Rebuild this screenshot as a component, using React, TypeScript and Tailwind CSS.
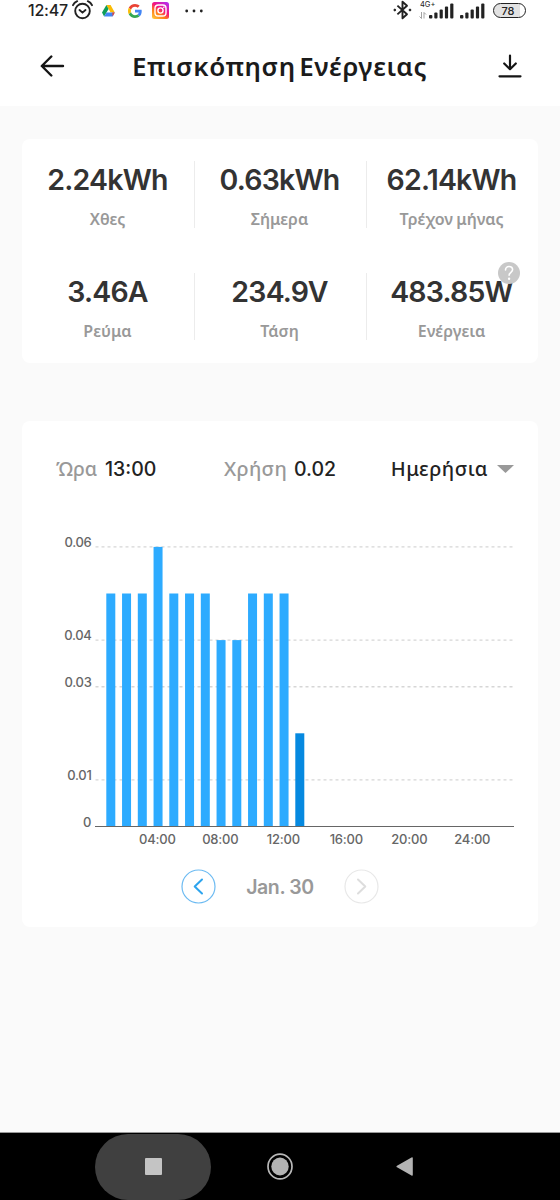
const bars = [5, 5, 5, 6, 5, 5, 5, 4, 4, 5, 5, 5, 2];
const hours = [4, 8, 12, 16, 20, 24];
const gridLines = [6, 4, 3, 1];

const stats = [
  { value: "2.24kWh", label: "Χθες" },
  { value: "0.63kWh", label: "Σήμερα" },
  { value: "62.14kWh", label: "Τρέχον μήνας" },
  { value: "3.46A", label: "Ρεύμα" },
  { value: "234.9V", label: "Τάση" },
  { value: "483.85W", label: "Ενέργεια", help: true },
];

function Signal() {
  return (
    <svg width="25" height="16" viewBox="0 0 25 16" fill="#222">
      <rect x="0" y="12" width="3.4" height="3.5" rx="1" />
      <rect x="5.3" y="9.5" width="3.2" height="6" rx="1" />
      <rect x="10.6" y="6.5" width="3.2" height="9" rx="1" />
      <rect x="15.9" y="3.5" width="3.2" height="12" rx="1" />
      <rect x="21.2" y="0.5" width="3.2" height="15" rx="1" />
    </svg>
  );
}

function StatusBar() {
  return (
    <div className="flex h-[22px] items-center pl-[28px] pr-[34px] text-[#222]">
      <span className="-mt-[2px] w-[44px] whitespace-nowrap text-[16px] leading-[22px] tracking-[-0.2px] font-medium">12:47</span>
      <svg className="-mt-[2px]" width="21" height="20" viewBox="0 0 21 20" fill="none" stroke="#222" strokeWidth="1.9" strokeLinecap="round">
        <circle cx="10.5" cy="11" r="7.3" />
        <path d="M1 5.2C1.8 3.4 3.2 2 5.2 1.2M20 5.2C19.2 3.4 17.8 2 15.8 1.2M7.5 10l3 2.6 3-2.6" />
      </svg>
      <svg className="ml-[9px] -mt-px" width="13" height="12" viewBox="0 0 13 12">
        <path d="M4.4 0h4.2l4.2 7.5H8.6z" fill="#fbbc04" />
        <path d="M4.4 0L0 7.6l2.1 3.9L6.6 3.9z" fill="#0f9d58" />
        <path d="M4.5 7.5h8.3l-2.2 4H2.1z" fill="#4285f4" />
        <path d="M10.3 7.5h2.5l-2.2 4z" fill="#ea4335" />
      </svg>
      <svg className="ml-[13px] -mt-px" width="14" height="14" viewBox="0 0 48 48">
        <path fill="#EA4335" d="M24 9.5c3.54 0 6.71 1.22 9.21 3.6l6.85-6.85C35.9 2.38 30.47 0 24 0 14.62 0 6.51 5.38 2.56 13.22l7.98 6.19C12.43 13.72 17.74 9.5 24 9.5z" />
        <path fill="#4285F4" d="M46.98 24.55c0-1.57-.15-3.09-.38-4.55H24v9.02h12.94c-.58 2.96-2.26 5.48-4.78 7.18l7.73 6c4.51-4.18 7.09-10.36 7.09-17.65z" />
        <path fill="#FBBC05" d="M10.53 28.59c-.48-1.45-.76-2.99-.76-4.59s.27-3.14.76-4.59l-7.98-6.19C.92 16.46 0 20.12 0 24c0 3.88.92 7.54 2.56 10.78l7.97-6.19z" />
        <path fill="#34A853" d="M24 48c6.48 0 11.93-2.13 15.89-5.81l-7.73-6c-2.15 1.45-4.92 2.3-8.16 2.3-6.26 0-11.57-4.22-13.47-9.91l-7.98 6.19C6.51 42.62 14.62 48 24 48z" />
      </svg>
      <svg className="ml-[10px] -mt-[2px]" width="17" height="17" viewBox="0 0 17 17" fill="none">
        <defs>
          <linearGradient id="insta" x1="0.1" y1="1" x2="0.8" y2="0">
            <stop offset="0" stopColor="#ffc53b" />
            <stop offset="0.35" stopColor="#ff7a18" />
            <stop offset="0.6" stopColor="#f5147f" />
            <stop offset="1" stopColor="#b72bea" />
          </linearGradient>
        </defs>
        <rect width="17" height="17" rx="2.5" fill="url(#insta)" />
        <rect x="3" y="3" width="11" height="11" rx="3.3" stroke="#fff" strokeWidth="1.4" />
        <circle cx="8.5" cy="8.5" r="2.6" stroke="#fff" strokeWidth="1.4" />
        <circle cx="11.8" cy="5.2" r="0.8" fill="#fff" />
      </svg>
      <svg className="ml-[16px] -mt-px" width="18" height="4" viewBox="0 0 18 4" fill="#222">
        <circle cx="1.7" cy="2" r="1.4" />
        <circle cx="9" cy="2" r="1.4" />
        <circle cx="16.3" cy="2" r="1.4" />
      </svg>

      <svg className="ml-auto -mt-[2px]" width="19" height="20" viewBox="0 0 19 20" fill="none" stroke="#222" strokeWidth="1.9">
        <path d="M4.4 5.6l9.6 8.6-4.5 4.1V1.7L14 5.8l-9.6 8.6" strokeLinejoin="round" />
        <circle cx="1.8" cy="10" r="0.9" fill="#222" strokeWidth="1" />
        <circle cx="17" cy="10" r="0.9" fill="#222" strokeWidth="1" />
      </svg>
      <div className="relative ml-[17px] h-[16px] w-[25px]">
        <Signal />
        <span className="absolute -left-[9px] -top-[2px] text-[7.5px] leading-[8px]">4G+</span>
        <svg className="absolute -left-[10px] top-[9px]" width="8" height="7" viewBox="0 0 8 7" fill="none" stroke="#999" strokeWidth="0.9">
          <path d="M2.5 0v6.5L0.5 4.5M5 6.5V0.5l2 2" />
        </svg>
      </div>
      <div className="ml-[6px] h-[16px]">
        <Signal />
      </div>
      <div className="ml-[8px] -mt-px flex h-[15px] w-[33px] items-center justify-center rounded-full border-[1.5px] border-[#222] bg-[linear-gradient(90deg,#e2e2e2_85%,#fff_85%)] text-[11px] leading-[12px] font-medium">
        <span className="-ml-[3px]">78</span>
      </div>
    </div>
  );
}

function Header() {
  return (
    <header className="flex h-[84px] items-center pl-[40px] pr-[38px] pt-[4px]">
      <svg width="25" height="22" viewBox="0 0 25 22" fill="none" stroke="#151515" strokeWidth="2.4" strokeLinecap="round" strokeLinejoin="round">
        <path d="M23 11H2M11.3 1.5L1.8 11l9.5 9.5" />
      </svg>
      <h1 className="-mt-px ml-[67px] whitespace-nowrap font-['Noto_Sans'] text-[26px] leading-[36px] font-semibold tracking-[0.6px] text-[#1b1b1b] [word-spacing:-4px]">
        Επισκόπηση Ενέργειας
      </h1>
      <svg className="ml-auto" width="24" height="24" viewBox="0 0 24 24" fill="none" stroke="#151515" strokeWidth="2.2" strokeLinecap="round" strokeLinejoin="round">
        <path d="M12 1.5v13.5M6.2 9.5L12 15.2l5.800-5.700M1.5 22.3h21" />
      </svg>
    </header>
  );
}

function Stats() {
  return (
    <section className="mx-[22px] mt-[33px] grid h-[224px] grid-cols-3 rounded-[8px] bg-white">
      {stats.map((s, i) => (
        <div key={s.label} className="relative flex h-[112px] flex-col items-center pt-[22px]">
          <div className="-ml-px text-[28.5px] leading-[38px] font-semibold tracking-[-0.8px] text-[#333]">{s.value}</div>
          <div className="-ml-px mt-[9px] whitespace-nowrap font-['Noto_Sans'] text-[16px] leading-[22px] font-semibold text-[#999] [word-spacing:-1px]">{s.label}</div>
          {i % 3 < 2 && <span className="absolute -right-px top-[22px] h-[67px] w-px bg-[#ececec]" />}
          {s.help && (
            <svg className="absolute right-[18px] top-[11px]" width="22" height="22" viewBox="0 0 22 22" fill="none">
              <circle cx="11" cy="11" r="11" fill="#c8c8c8" />
              <path d="M7.5 8c0-2 1.5-3.5 3.5-3.5s3.6 1.3 3.6 3.3c0 2.4-3.5 2.7-3.5 5.5" stroke="#fff" strokeWidth="1.6" strokeLinecap="round" />
              <circle cx="11.1" cy="16.7" r="1.2" fill="#fff" />
            </svg>
          )}
        </div>
      ))}
    </section>
  );
}

function Chart() {
  // 0.01 kWh is 46.6px high, one hour is 15.75px wide
  const y = (v: number) => 296.5 - v * 46.6;
  return (
    <svg className="block" width="516" height="330" viewBox="0 0 516 330">
      {gridLines.map((v) => (
        <g key={v}>
          <path d={`M73.5 ${y(v)}H492`} stroke="#d6d6d6" strokeWidth="1.4" strokeDasharray="3 3" />
          <text x="69.5" y={y(v) + 0.2} textAnchor="end" fontSize="13" fontWeight="500" letterSpacing="-0.3" fill="#666">
            {`0.0${v}`}
          </text>
        </g>
      ))}
      <text x="69.5" y={296.5} textAnchor="end" fontSize="13" fontWeight="500" fill="#666">0</text>
      {bars.map((v, i) => (
        <rect key={i} x={84.3 + i * 15.75} y={y(v)} width="9" height={v * 46.6} fill={i === 12 ? "#0689e0" : "#2dabff"} />
      ))}
      <path d="M73 296.5H492" stroke="#666" strokeWidth="1.2" />
      {hours.map((h) => (
        <text key={h} x={72.3 + h * 15.75} y="314" textAnchor="middle" fontSize="13" fontWeight="500" letterSpacing="-0.2" fill="#666">
          {`${String(h).padStart(2, "0")}:00`}
        </text>
      ))}
    </svg>
  );
}

function Usage() {
  return (
    <section className="mx-[22px] mt-[58px] h-[506px] rounded-[8px] bg-white">
      <div className="flex h-[109px] pl-[34px] pr-[24px] pt-[34px] text-[19.5px] leading-[28px] font-medium text-[#222]">
        <div className="flex w-[168px] whitespace-nowrap">
          <span className="w-[49px] font-['Noto_Sans'] text-[19.5px] text-[#999]">Ώρα</span>
          <span>13:00</span>
        </div>
        <div className="flex whitespace-nowrap">
          <span className="w-[70px] font-['Noto_Sans'] text-[20px] tracking-[0.3px] text-[#999]">Χρήση</span>
          <span>0.02</span>
        </div>
        <button className="ml-auto flex items-start whitespace-nowrap font-['Noto_Sans'] text-[20px] leading-[28px] tracking-[0.5px]">
          Ημερήσια
          <svg className="ml-[9px] mt-[10px]" width="17" height="8" viewBox="0 0 17 8">
            <path d="M0 0h17L8.5 8z" fill="#999" />
          </svg>
        </button>
      </div>
      <Chart />
      <div className="mt-[9px] flex items-center pl-[159px]">
        <button>
          <svg width="35" height="35" viewBox="0 0 35 35" fill="none">
            <circle cx="17.5" cy="17.5" r="16.5" stroke="#6dbbf2" strokeWidth="1.2" />
            <path d="M21 10.5l-7.3 7 7.3 7" stroke="#2da4ee" strokeWidth="2" strokeLinecap="round" strokeLinejoin="round" />
          </svg>
        </button>
        <span className="w-[128px] text-center text-[19.5px] leading-[28px] font-semibold tracking-[-0.4px] text-[#999]">Jan. 30</span>
        <button>
          <svg width="35" height="35" viewBox="0 0 35 35" fill="none">
            <circle cx="17.5" cy="17.5" r="16.5" stroke="#e8e8e8" strokeWidth="1.2" />
            <path d="M14 10.5l7.3 7-7.3 7" stroke="#ddd" strokeWidth="2" strokeLinecap="round" strokeLinejoin="round" />
          </svg>
        </button>
      </div>
    </section>
  );
}

function NavBar() {
  return (
    <nav className="mt-auto flex h-[68px] items-end overflow-hidden border-t border-[#999] bg-black pl-[95px]">
      <div className="flex h-[66px] w-[116px] justify-center overflow-hidden rounded-[35px] bg-[#404040] pt-[24px]">
        <span className="h-[17px] w-[17px] rounded-[1px] bg-[#c4c4c4]" />
      </div>
      <svg className="mb-[20px] ml-[56px]" width="26" height="27" viewBox="0 0 26 27" fill="none">
        <ellipse cx="13" cy="13.5" rx="12" ry="12.4" stroke="#b8b8b8" strokeWidth="1.7" />
        <ellipse cx="13" cy="13.5" rx="8.7" ry="9" fill="#b3b3b3" />
      </svg>
      <svg className="mb-[24px] ml-[103px]" width="17" height="19" viewBox="0 0 17 19">
        <path d="M15.5 .4L1 8.7q-1.2.8 0 1.6l14.5 8.3q1.3.6 1.3-.8V1.2q0-1.4-1.3-.8z" fill="#b3b3b3" />
      </svg>
    </nav>
  );
}

export default function App() {
  return (
    <div className="flex h-[1200px] w-[560px] flex-col overflow-hidden bg-[#fafafa] font-['Inter','Liberation_Sans',sans-serif]">
      <div className="bg-white">
        <StatusBar />
        <Header />
      </div>
      <Stats />
      <Usage />
      <NavBar />
    </div>
  );
}
